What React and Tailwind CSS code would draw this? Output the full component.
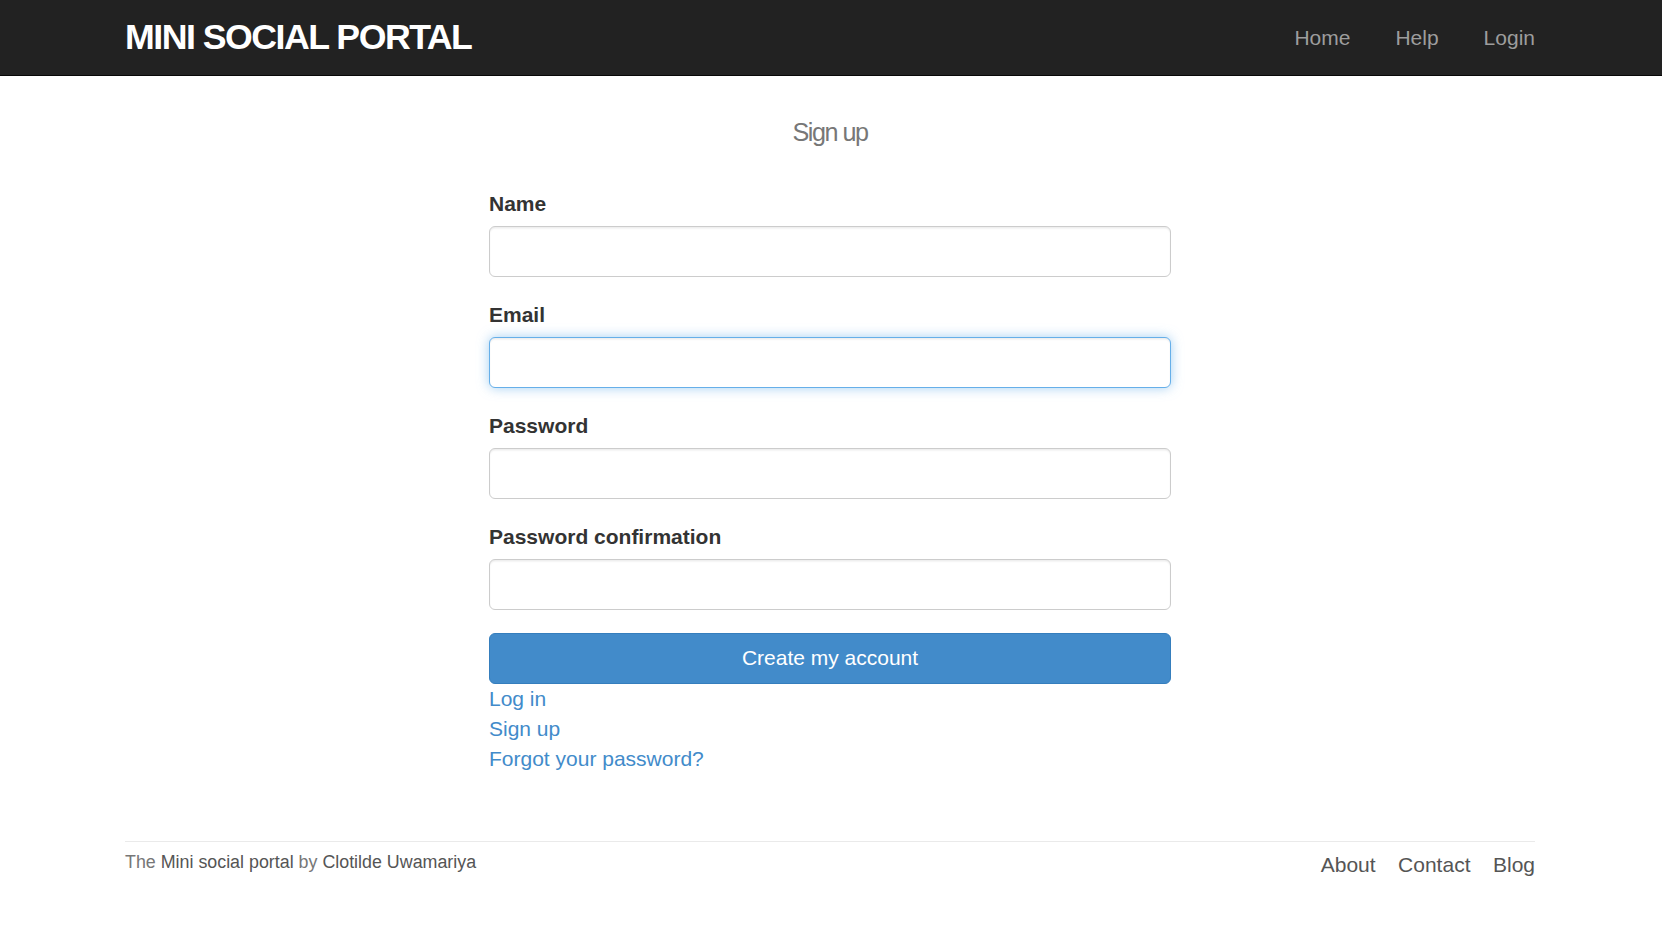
const fields = [
  { id: 'name', label: 'Name', type: 'text' },
  { id: 'email', label: 'Email', type: 'email', focused: true },
  { id: 'password', label: 'Password', type: 'password' },
  { id: 'password_confirmation', label: 'Password confirmation', type: 'password' },
];

function Header() {
  return (
    <header className="h-[76px] bg-[#222222] border-b border-[#080808]">
      <div className="w-[1660px]">
        <div className="mx-auto w-[1410px] h-[75px] flex items-center justify-between">
          <a href="#" className="text-white font-bold uppercase text-[35.7px] leading-none tracking-[-1.5px]">
            Mini social portal
          </a>
          <nav className="flex -mr-[22.5px]">
            {['Home', 'Help', 'Login'].map((item) => (
              <a key={item} href="#" className="px-[22.5px] text-[21px] leading-[30px] text-[#9d9d9d]">
                {item}
              </a>
            ))}
          </nav>
        </div>
      </div>
    </header>
  );
}

function SignupForm() {
  return (
    <form className="mx-auto w-[682px]" onSubmit={(e) => e.preventDefault()}>
      {fields.map((f) => (
        <div key={f.id}>
          <label htmlFor={f.id} className="block mb-[7.5px] text-[21px] leading-[30px] font-bold text-[#333333]">
            {f.label}
          </label>
          <input
            id={f.id}
            type={f.type}
            className={
              f.focused
                ? 'block w-full h-[51px] mb-[22.5px] px-[18px] rounded-[6px] border border-[#66afe9] bg-white outline-none shadow-[inset_0_1.5px_1.5px_rgba(0,0,0,0.075),0_0_12px_rgba(102,175,233,0.6)]'
                : 'block w-full h-[51px] mb-[22.5px] px-[18px] rounded-[6px] border border-[#cccccc] bg-white outline-none shadow-[inset_0_1.5px_1.5px_rgba(0,0,0,0.075)]'
            }
          />
        </div>
      ))}
      <button
        type="submit"
        className="block w-full h-[51px] rounded-[6px] border border-[#357ebd] bg-[#428bca] text-white text-[21px]"
      >
        Create my account
      </button>
      <div className="text-[21px] leading-[30px] text-[#428bca]">
        <a href="#" className="block w-max">Log in</a>
        <a href="#" className="block w-max">Sign up</a>
        <a href="#" className="block w-max">Forgot your password?</a>
      </div>
    </form>
  );
}

function Footer() {
  return (
    <footer className="mx-auto w-[1410px] mt-[67.5px] pt-[7.5px] border-t border-[#eaeaea] flex justify-between">
      <small className="text-[17.85px] leading-[25.5px] text-[#777777]">
        The <a href="#" className="text-[#555555]">Mini social portal</a> by{' '}
        <a href="#" className="text-[#555555]">Clotilde Uwamariya</a>
      </small>
      <ul className="flex gap-[22.5px] text-[21px] leading-[30px] text-[#555555]">
        <li><a href="#">About</a></li>
        <li><a href="#">Contact</a></li>
        <li><a href="#">Blog</a></li>
      </ul>
    </footer>
  );
}

export default function App() {
  return (
    <div className="min-h-[938px] bg-white font-['Liberation_Sans',Arial,sans-serif] text-[#333333]">
      <Header />
      <div className="w-[1660px]">
        <main className="mx-auto w-[1410px] pt-[43px]">
          <h2 className="text-center text-[25.2px] leading-[1.1] tracking-[-1.5px] text-[#777777] mb-[42px]">
            Sign up
          </h2>
          <SignupForm />
        </main>
        <Footer />
      </div>
    </div>
  );
}
